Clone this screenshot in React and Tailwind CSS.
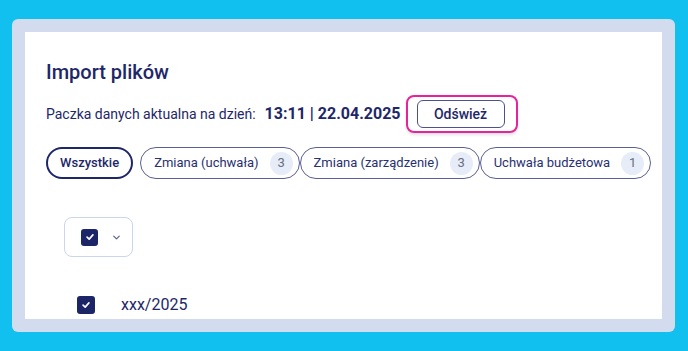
import React, { useState } from 'react';

const chips = [
  { label: 'Zmiana (uchwała)', count: 3 },
  { label: 'Zmiana (zarządzenie)', count: 3 },
  { label: 'Uchwała budżetowa', count: 1 },
];

function Check({ size = 'w-[17px] h-[17px]' }) {
  return (
    <span className={`${size} shrink-0 rounded-[3px] bg-[#1c2565] flex items-center justify-center`}>
      <svg viewBox="0 0 12 12" className="w-[10px] h-[10px]" fill="none" stroke="white" strokeWidth="2" strokeLinecap="round" strokeLinejoin="round">
        <path d="M2.5 6.2 5 8.5 9.5 3.5" />
      </svg>
    </span>
  );
}

export default function App() {
  const [active, setActive] = useState('all');

  return (
    <div className="min-h-screen bg-[#12c0f0] pt-[19px] pl-[12px] font-['Roboto',sans-serif] text-[#1e2768]">
      <div className="w-[663px] h-[313px] rounded-[6px] bg-[#d3dcee] p-[13px]">
        <div className="h-full bg-white overflow-hidden pl-[21px] pt-[28px]">
          <h1 className="text-[20px] leading-[24px] font-medium">Import plików</h1>

          <div className="mt-[11px] flex items-center whitespace-nowrap">
            <span className="text-[14px]">Paczka danych aktualna na dzień:</span>
            <span className="ml-[9px] text-[16px] font-bold">13:11 | 22.04.2025</span>
            <div className="ml-[5px] rounded-[8px] border-2 border-[#e5249b] pl-[9px] pr-[11px] py-[3px] shadow-[0_2px_3px_rgba(0,0,0,0.12)]">
              <button className="w-[88px] h-[28px] rounded-[6px] border border-[#4b5190] text-[14px] font-medium">
                Odśwież
              </button>
            </div>
          </div>

          <div className="mt-[14px] flex items-center whitespace-nowrap">
            <button
              onClick={() => setActive('all')}
              className="shrink-0 h-[32px] px-[12px] rounded-full border-2 border-[#1e2768] text-[13px] font-medium"
            >
              Wszystkie
            </button>
            {chips.map((c, i) => (
              <button
                key={c.label}
                onClick={() => setActive(c.label)}
                className={`shrink-0 h-[32px] pl-[13px] pr-[6px] rounded-full border border-[#5a5f92] flex items-center gap-[11px] text-[13px] text-[#283070] ${i === 0 ? 'ml-[7px]' : 'ml-0'}`}
              >
                <span>{c.label}</span>
                <span className="w-[23px] h-[23px] rounded-full bg-[#e6ecf8] text-[13px] text-[#6b6f80] flex items-center justify-center">
                  {c.count}
                </span>
              </button>
            ))}
          </div>

          <div className="mt-[38px] ml-[18px] w-[69px] h-[40px] rounded-[8px] border border-[#c9d6ee] flex items-center pl-[16px] gap-[13px]">
            <Check />
            <svg viewBox="0 0 12 12" className="w-[11px] h-[11px]" fill="none" stroke="#5f6593" strokeWidth="1.4" strokeLinecap="round" strokeLinejoin="round">
              <path d="M3 4.5 6 7.5 9 4.5" />
            </svg>
          </div>

          <div className="mt-[36px] ml-[31px] flex items-center gap-[26px]">
            <Check size="w-[18px] h-[18px]" />
            <span className="text-[16px]">xxx/2025</span>
          </div>
        </div>
      </div>
    </div>
  );
}
